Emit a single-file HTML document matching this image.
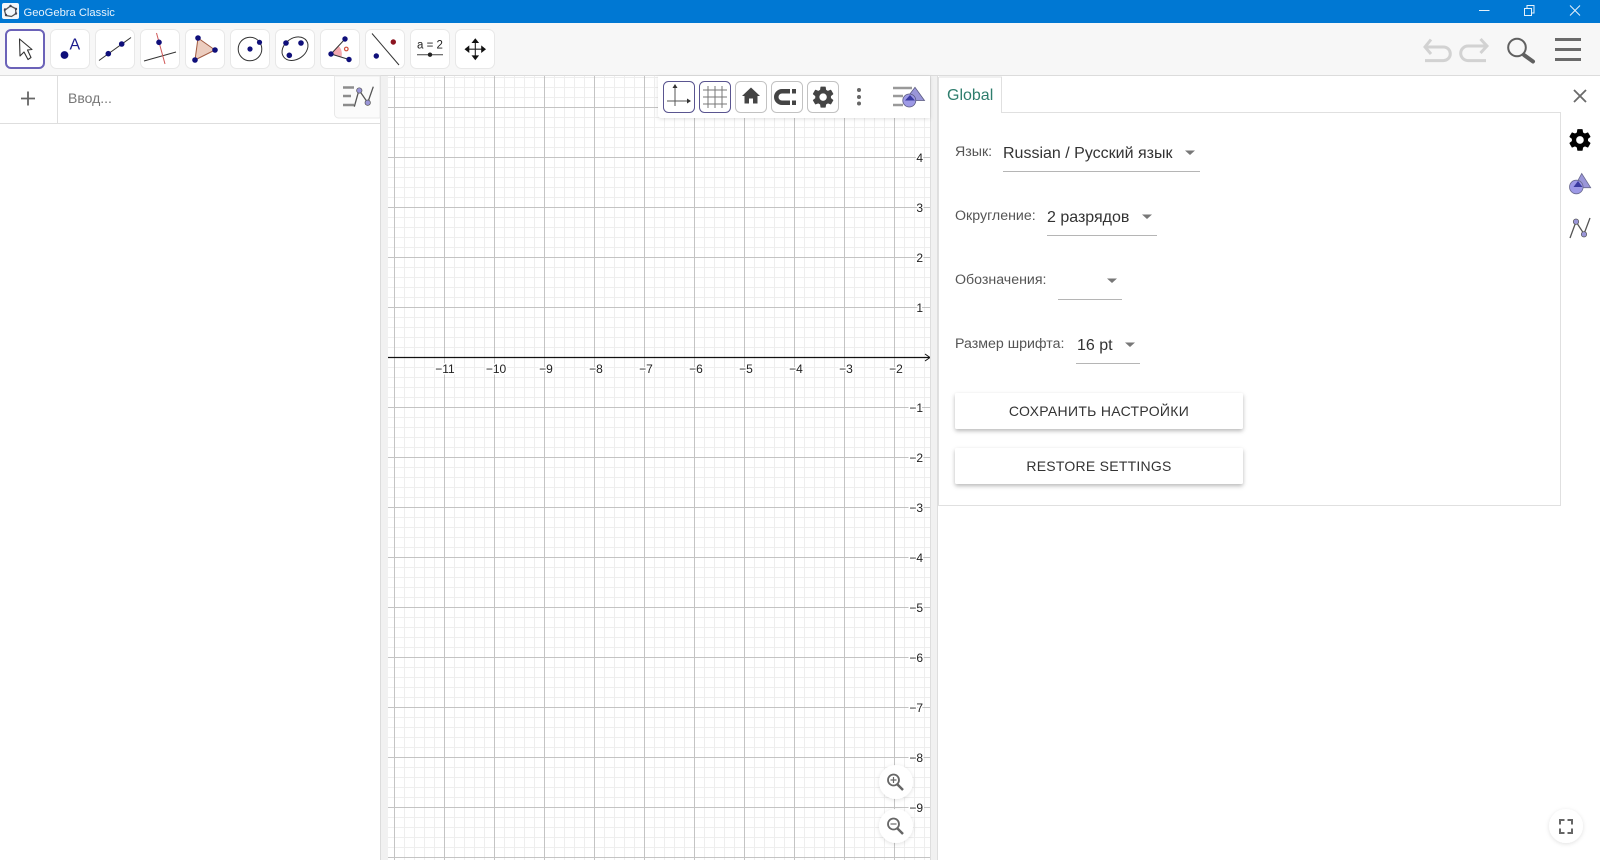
<!DOCTYPE html>
<html lang="ru"><head><meta charset="utf-8"><title>GeoGebra Classic</title>
<style>
html,body{margin:0;padding:0;width:1600px;height:860px;overflow:hidden;background:#fff}
svg{display:block;font-family:"Liberation Sans","Noto Sans CJK SC",sans-serif}
</style></head><body>
<svg width="1600" height="860" viewBox="0 0 1600 860" xmlns="http://www.w3.org/2000/svg">
<defs>
<pattern id="minor" x="4" y="7" width="10" height="10" patternUnits="userSpaceOnUse"><path d="M.5 0V10M0 .5H10" stroke="#eeeeee" stroke-width="1" fill="none"/></pattern>
<pattern id="major" x="44" y="7" width="50" height="50" patternUnits="userSpaceOnUse"><path d="M.5 0V50M0 .5H50" stroke="#c4c4c4" stroke-width="1" fill="none"/></pattern>
<filter id="sh" x="-20%" y="-40%" width="140%" height="190%"><feDropShadow dx="0" dy="2" stdDeviation="2" flood-color="#000" flood-opacity=".28"/></filter>
<filter id="sh2" x="-30%" y="-30%" width="160%" height="170%"><feDropShadow dx="0" dy="1" stdDeviation="2" flood-color="#000" flood-opacity=".12"/></filter>
<path id="gear" d="M19.43 12.98c.04-.32.07-.64.07-.98s-.03-.66-.07-.98l2.11-1.65c.19-.15.24-.42.12-.64l-2-3.46c-.12-.22-.39-.3-.61-.22l-2.49 1c-.52-.4-1.08-.73-1.69-.98l-.38-2.65C14.46 2.18 14.25 2 14 2h-4c-.25 0-.46.18-.49.42l-.38 2.65c-.61.25-1.17.59-1.69.98l-2.49-1c-.23-.09-.49 0-.61.22l-2 3.46c-.13.22-.07.49.12.64l2.11 1.65c-.04.32-.07.65-.07.98s.03.66.07.98l-2.11 1.65c-.19.15-.24.42-.12.64l2 3.46c.12.22.39.3.61.22l2.49-1c.52.4 1.08.73 1.69.98l.38 2.65c.03.24.24.42.49.42h4c.25 0 .46-.18.49-.42l.38-2.65c.61-.25 1.17-.59 1.69-.98l2.49 1c.23.09.49 0 .61-.22l2-3.46c.12-.22.07-.49-.12-.64l-2.01-1.65zM12 15.5c-1.93 0-3.5-1.57-3.5-3.5s1.57-3.5 3.5-3.5 3.5 1.57 3.5 3.5-1.57 3.5-3.5 3.5z"/>
</defs>

<rect width="1600" height="860" fill="#fff"/>

<!-- graphics view -->
<rect x="388" y="76" width="542" height="784" fill="url(#minor)"/>
<rect x="388" y="76" width="542" height="784" fill="url(#major)"/>
<path d="M388 357.500H929" stroke="#111" stroke-width="1.200"/>
<path d="M925 354l5 3.500-5 3.500" stroke="#111" stroke-width="1" fill="none"/>
<g font-size="12" fill="#222" stroke="#fff" stroke-width="3" paint-order="stroke" stroke-linejoin="round">
<g text-anchor="middle">
<text x="445" y="373">−11</text><text x="496" y="373">−10</text><text x="546" y="373">−9</text><text x="596" y="373">−8</text><text x="646" y="373">−7</text><text x="696" y="373">−6</text><text x="746" y="373">−5</text><text x="796" y="373">−4</text><text x="846" y="373">−3</text><text x="896" y="373">−2</text>
</g>
<g text-anchor="end">
<text x="923" y="162">4</text><text x="923" y="212">3</text><text x="923" y="262">2</text><text x="923" y="312">1</text>
<text x="923" y="412">−1</text><text x="923" y="462">−2</text><text x="923" y="512">−3</text><text x="923" y="562">−4</text><text x="923" y="612">−5</text><text x="923" y="662">−6</text><text x="923" y="712">−7</text><text x="923" y="762">−8</text><text x="923" y="812">−9</text>
</g></g>

<!-- splitters -->
<rect x="380" y="76" width="8" height="784" fill="#f1f1f1"/>
<path d="M380.500 76V860" stroke="#dcdcdc"/>
<rect x="930" y="76" width="8" height="784" fill="#f1f1f1"/>
<path d="M930.500 76V860M937.500 76V860" stroke="#dedede"/>

<!-- title bar -->
<rect width="1600" height="23" fill="#0078d3"/>
<rect x="2" y="3" width="17" height="16" rx="2" fill="#f4f7fa"/>
<path d="M10.500 6l5 2.500.5 5-4.500 3-5.500-1-1.500-5z" fill="none" stroke="#555" stroke-width="1.300"/>
<g fill="#445"><circle cx="10.500" cy="6" r="1.200"/><circle cx="16" cy="9" r="1.200"/><circle cx="16" cy="13.500" r="1.200"/><circle cx="6" cy="15" r="1.200"/><circle cx="5" cy="9.500" r="1.200"/></g>
<text x="23.500" y="16" font-size="11.200" fill="#e8f2fb">GeoGebra Classic</text>
<g stroke="#e6f2fb" stroke-width="1" fill="none">
<path d="M1479 10.500H1489.500"/>
<path d="M1524.500 8.500h7v7h-7zM1527 8V5.500h7v7.500h-2.500"/>
<path d="M1570 5.500l10 10M1580 5.500l-10 10"/>
</g>

<!-- toolbar -->
<rect y="23" width="1600" height="52" fill="#f7f7f7"/>
<path d="M0 75.500H1600" stroke="#dcdcdc"/>
<g fill="#fff" stroke="#e8e8e8" stroke-width="1">
<rect x="50.500" y="29.500" width="39" height="39" rx="6"/>
<rect x="95.500" y="29.500" width="39" height="39" rx="6"/>
<rect x="140.500" y="29.500" width="39" height="39" rx="6"/>
<rect x="185.500" y="29.500" width="39" height="39" rx="6"/>
<rect x="230.500" y="29.500" width="39" height="39" rx="6"/>
<rect x="275.500" y="29.500" width="39" height="39" rx="6"/>
<rect x="320.500" y="29.500" width="39" height="39" rx="6"/>
<rect x="365.500" y="29.500" width="39" height="39" rx="6"/>
<rect x="410.500" y="29.500" width="39" height="39" rx="6"/>
<rect x="455.500" y="29.500" width="39" height="39" rx="6"/>
</g>
<rect x="6" y="30" width="38" height="38" rx="5" fill="#fff" stroke="#6b62b8" stroke-width="2"/>
<path d="M19.500 39L20 56l4-4 4 7.500 3-2-3.500-7.500 4.500-.5z" fill="#fff" stroke="#333" stroke-width="1.100" stroke-linejoin="round"/>
<circle cx="64.500" cy="55" r="3.900" fill="#0f0f7a"/>
<text x="69.500" y="49.500" font-size="16" fill="#1c1c8e">A</text>
<path d="M99 60.500L131 37.500" stroke="#333" stroke-width="1"/>
<circle cx="108.300" cy="53.700" r="2.800" fill="#0f0f7a"/><circle cx="121.700" cy="44" r="2.800" fill="#0f0f7a"/>
<path d="M144 61L176 52" stroke="#333" stroke-width="1"/><path d="M156.500 33L165 64" stroke="#d05858" stroke-width="1"/>
<circle cx="159" cy="42.300" r="2.800" fill="#0f0f7a"/>
<path d="M198 38L215 50 195 60z" fill="#eccdbf" stroke="#a05a40" stroke-width="1"/>
<circle cx="198" cy="38" r="2.800" fill="#0f0f7a"/><circle cx="215" cy="50" r="2.800" fill="#0f0f7a"/><circle cx="195" cy="60" r="2.800" fill="#0f0f7a"/>
<circle cx="250" cy="49" r="11.800" fill="none" stroke="#333" stroke-width="1"/>
<circle cx="250" cy="49" r="2.600" fill="#0f0f7a"/><circle cx="259.500" cy="42.300" r="2.600" fill="#0f0f7a"/>
<ellipse cx="295" cy="48.700" rx="14" ry="10.500" transform="rotate(-35 295 48.700)" fill="none" stroke="#333" stroke-width="1"/>
<circle cx="286" cy="43" r="2.800" fill="#0f0f7a"/><circle cx="301" cy="43" r="2.800" fill="#0f0f7a"/><circle cx="289.300" cy="55.300" r="2.800" fill="#0f0f7a"/>
<path d="M331 54L338.300 45.800A11 11 0 0 1 341.500 57z" fill="#f4a9b0"/>
<path d="M345 39L331 54 349 59.500" fill="none" stroke="#333" stroke-width="1"/>
<circle cx="331" cy="54" r="2.700" fill="#0f0f7a"/><circle cx="345" cy="39" r="2.700" fill="#0f0f7a"/><circle cx="349" cy="59.500" r="2.700" fill="#0f0f7a"/>
<circle cx="346.300" cy="49" r="1.800" fill="none" stroke="#d0503c" stroke-width="1.200"/>
<path d="M372 33.500L399 65" stroke="#333" stroke-width="1"/>
<circle cx="393.300" cy="42" r="2.700" fill="#8c1420"/><circle cx="376.300" cy="56" r="2.700" fill="#0f0f7a"/>
<text x="430" y="48.500" font-size="11.500" fill="#222" text-anchor="middle">a = 2</text>
<path d="M417 54.700H443" stroke="#444" stroke-width="1"/><circle cx="430" cy="54.700" r="2.200" fill="#222"/>
<path d="M475.300 42V56.500M468 49.200H482.500" stroke="#222" stroke-width="1.100"/>
<path d="M475.300 38.200l-3.800 4.800h7.600zM475.300 60.200l-3.800-4.800h7.600zM464.500 49.200l4.800-3.800v7.600zM486 49.200l-4.800-3.800v7.600z" fill="#111"/>

<!-- undo/redo/search/menu -->
<g fill="none" stroke="#d2d2d2" stroke-width="3">
<path d="M1426 47H1443.500a6.800 6.800 0 0 1 0 13.600H1425"/><path d="M1431 39.500l-6 7.500 6 7"/>
<path d="M1486 46H1468a7.200 7.200 0 0 0 0 14.600H1486"/><path d="M1480.500 39l6.500 7-6.500 7"/>
</g>
<circle cx="1517" cy="47.500" r="8.800" fill="none" stroke="#606060" stroke-width="2"/>
<path d="M1524 55L1533 61.500" stroke="#606060" stroke-width="4" stroke-linecap="round"/>
<g fill="#6a6a6a"><rect x="1555" y="38" width="26" height="3"/><rect x="1555" y="48" width="26" height="3"/><rect x="1555" y="58" width="26" height="3"/></g>

<!-- algebra panel -->
<path d="M0 123.500H380M57.500 76V123" stroke="#dedede"/>
<path d="M21 98.500H35M28 91.500V105.500" stroke="#666" stroke-width="1.800"/>
<text x="68" y="103" font-size="14" fill="#777">Ввод...</text>
<path d="M334.500 76V114a4 4 0 0 0 4 4H380V76z" fill="#fbfbfb" stroke="#e8e8e8"/>
<g stroke="#8c8c8c" stroke-width="2.500"><path d="M343 87.500H354M343 96H351M343 105H354"/></g>
<path d="M354.300 106.700L359 90 367.700 102.700 373.300 86.700" fill="none" stroke="#555" stroke-width="1.300"/>
<circle cx="359.300" cy="90.500" r="2.700" fill="#9a96d8" stroke="#555" stroke-width=".7"/><circle cx="367.700" cy="102.700" r="2.700" fill="#9a96d8" stroke="#555" stroke-width=".7"/>

<!-- style bar -->
<path d="M658 76H930V118H661a3 3 0 0 1-3-3z" fill="#fff" filter="url(#sh2)"/>
<g fill="#fff" stroke="#c2c2c2" stroke-width="1">
<rect x="735.500" y="81.500" width="31" height="31" rx="5"/>
<rect x="771.500" y="81.500" width="31" height="31" rx="5"/>
<rect x="807.500" y="81.500" width="31" height="31" rx="5"/>
</g>
<g fill="#fff" stroke="#5a5590" stroke-width="1">
<rect x="663.500" y="81.500" width="31" height="31" rx="5"/>
<rect x="699.500" y="81.500" width="31" height="31" rx="5"/>
</g>
<path d="M675 85V106M667 101H690" stroke="#555" stroke-width="1"/>
<path d="M672.500 88L675 84l2.500 4zM687 98.500l4 2.500-4 2.500z" fill="#333"/>
<path d="M708 86V108M715 86V108M722 86V108M703 90H727M703 97H727M703 104H727" stroke="#777" stroke-width="1"/>
<path d="M751 87.500L742 96h2.500v7.500h4.500v-5h4v5h4.500V96h2.500z" fill="#444"/>
<path d="M790 89h-8a8 8 0 0 0 0 16h8v-4.500h-8a3.500 3.500 0 0 1 0-7h8z" fill="#444"/>
<rect x="792" y="89" width="4" height="4.500" fill="#444"/><rect x="792" y="100.500" width="4" height="4.500" fill="#444"/>
<use href="#gear" transform="translate(810.500 84.500) scale(1.050)" fill="#444"/>
<g fill="#666"><circle cx="859" cy="90" r="2"/><circle cx="859" cy="97" r="2"/><circle cx="859" cy="103.500" r="2"/></g>
<g stroke="#999" stroke-width="2.500"><path d="M893 88H912M893 96H903M893 105H903"/></g>
<path d="M915 87.300L924.500 100.500H905z" fill="#9a96d8" stroke="#5a5a80" stroke-width=".8"/>
<circle cx="909.300" cy="100.500" r="6.500" fill="#9d99e6" stroke="#5a5a80" stroke-width=".8"/>
<path d="M910 95L905 100.500H915z" fill="#3a3aa0"/>

<!-- zoom buttons -->
<circle cx="896" cy="782" r="17" fill="#fff" filter="url(#sh2)"/>
<circle cx="896" cy="826" r="17" fill="#fff" filter="url(#sh2)"/>
<g fill="none" stroke="#666">
<circle cx="893.500" cy="780" r="5.500" stroke-width="1.800"/><path d="M897.500 784.500L903 790" stroke-width="2.500"/><path d="M890.500 780H896.500M893.500 777V783" stroke-width="1.200"/>
<circle cx="893.500" cy="824" r="5.500" stroke-width="1.800"/><path d="M897.500 828.500L903 834" stroke-width="2.500"/><path d="M890.500 824H896.500" stroke-width="1.200"/>
</g>

<!-- properties panel -->
<path d="M938.500 112.500V505.500H1560.500V112.500H1001.500V77H939" fill="none" stroke="#e0e0e0"/>
<path d="M938.500 77V112.500" stroke="#e0e0e0"/>
<rect x="939" y="112" width="62" height="2" fill="#fff"/>
<text x="947" y="100" font-size="16" fill="#2e7d6d">Global</text>
<path d="M1574 90l12 12M1586 90l-12 12" stroke="#6a6a6a" stroke-width="1.800"/>
<use href="#gear" transform="translate(1567 127) scale(1.080)" fill="#000"/>
<path d="M1581.700 173.500L1590.700 187.700H1574z" fill="#9a96d8" stroke="#6a6a90" stroke-width=".8"/>
<circle cx="1576.300" cy="187" r="6.800" fill="#9d99e6" stroke="#6a6a90" stroke-width=".8"/>
<path d="M1578 181L1573.500 187H1582.500z" fill="#3a3aa0"/>
<path d="M1570 238L1576 221.700 1584 234 1590 218" fill="none" stroke="#555" stroke-width="1.300"/>
<circle cx="1576" cy="221.700" r="2.700" fill="#9a96d8" stroke="#555" stroke-width=".7"/><circle cx="1584" cy="234.300" r="2.700" fill="#9a96d8" stroke="#555" stroke-width=".7"/>

<g font-size="14.200" fill="#555">
<text x="955" y="156">Язык:</text>
<text x="955" y="220">Округление:</text>
<text x="955" y="284">Обозначения:</text>
<text x="955" y="348">Размер шрифта:</text>
</g>
<g font-size="16" fill="#333">
<text x="1003" y="158">Russian / Русский язык</text>
<text x="1047" y="222">2 разрядов</text>
<text x="1077" y="350">16 pt</text>
</g>
<g stroke="#b5b5b5"><path d="M1003 171.500H1200M1047 235.500H1157M1058 299.500H1122M1076 363.500H1140"/></g>
<g fill="#777"><path d="M1185 150.500h10l-5 4.500zM1142 214.500h10l-5 4.500zM1107 278.500h10l-5 4.500zM1125 342.500h10l-5 4.500z"/></g>

<rect x="955" y="393" width="288" height="36" rx="2" fill="#fff" filter="url(#sh)"/>
<rect x="955" y="448" width="288" height="36" rx="2" fill="#fff" filter="url(#sh)"/>
<text x="1099" y="416" font-size="14" letter-spacing=".3" fill="#333" text-anchor="middle">СОХРАНИТЬ НАСТРОЙКИ</text>
<text x="1099" y="471" font-size="14" letter-spacing=".25" fill="#333" text-anchor="middle">RESTORE SETTINGS</text>

<!-- fullscreen -->
<circle cx="1566" cy="826" r="17" fill="#fff" filter="url(#sh2)"/>
<path d="M1560 824.500V820H1564.500M1567.500 820H1572V824.500M1572 828.500V833H1567.500M1564.500 833H1560V828.500" fill="none" stroke="#666" stroke-width="2"/>
</svg>
</body></html>
